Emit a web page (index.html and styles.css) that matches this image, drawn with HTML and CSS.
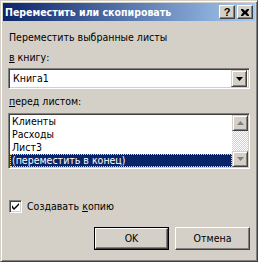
FILE: index.html
```html
<!DOCTYPE html>
<html>
<head>
<meta charset="utf-8">
<link rel="stylesheet" href="styles.css">
</head>
<body>
<div class="window">
  <div class="titlebar">
    <span class="title">Переместить или скопировать</span>
    <div class="caps">
      <span class="cap">?</span>
      <span class="cap cap-x"><svg width="8" height="7" viewBox="0 0 8 7"><path d="M0 0h2l2 2 2-2h2v1L6 3.5 8 6v1H6L4 5 2 7H0V6l2-2.5L0 1z" fill="#000"/></svg></span>
    </div>
  </div>
  <div class="body">
    <div class="label l1">Переместить выбранные листы</div>
    <div class="label l2"><u>в</u> книгу:</div>
    <div class="combo">
      <span class="combo-text">Книга1</span>
      <span class="drop"><svg width="7" height="4" viewBox="0 0 7 4"><path d="M0 0h7L3.5 4z" fill="#000"/></svg></span>
    </div>
    <div class="label l3"><u>п</u>еред листом:</div>
    <div class="list">
      <div class="items">
        <div class="item">Клиенты</div>
        <div class="item">Расходы</div>
        <div class="item">Лист3</div>
        <div class="item sel">(переместить в конец)</div>
      </div>
      <div class="sbar">
        <span class="sbtn"><svg width="7" height="4" viewBox="0 0 7 4"><path d="M3.5 0L7 4H0z" fill="#808080"/></svg></span>
        <span class="track"></span>
        <span class="sbtn"><svg width="7" height="4" viewBox="0 0 7 4"><path d="M0 0h7L3.5 4z" fill="#808080"/></svg></span>
      </div>
    </div>
    <label class="check">
      <span class="box"><svg width="9" height="9" viewBox="0 0 9 9"><path d="M1 3v3l2 2 5-5V1L3 6z" fill="#000"/></svg></span>
      <span>Создавать <u>к</u>опию</span>
    </label>
    <div class="buttons">
      <span class="btn default"><span class="btn-in">OK</span></span>
      <span class="btn"><span class="btn-in">Отмена</span></span>
    </div>
  </div>
</div>
</body>
</html>
```
FILE: styles.css
```css
html, body {
  margin: 0;
  padding: 0;
  background: #d4d0c8;
}
body {
  font-family: "DejaVu Sans Condensed", "DejaVu Sans", sans-serif;
  font-size: 10.5px;
  line-height: 13px;
  color: #000;
}
.window {
  width: 258px;
  height: 262px;
  box-sizing: border-box;
  border: 1px solid;
  border-color: #d4d0c8 #404040 #404040 #d4d0c8;
  box-shadow: inset 1px 1px #fff, inset -1px -1px #808080;
  padding: 2px;
  background: #d4d0c8;
  display: flex;
  flex-direction: column;
}
.titlebar {
  height: 18px;
  flex: none;
  background: linear-gradient(to right, #0a246a, #a6caf0);
  display: flex;
  align-items: center;
  justify-content: space-between;
}
.title {
  color: #fff;
  font-weight: bold;
  font-size: 10.5px;
  padding-left: 2px;
}
.caps {
  display: flex;
  gap: 2px;
  margin-right: 2px;
}
.cap {
  width: 16px;
  height: 14px;
  box-sizing: border-box;
  background: #d4d0c8;
  border: 1px solid;
  border-color: #fff #404040 #404040 #fff;
  box-shadow: inset -1px -1px #808080;
  display: flex;
  align-items: center;
  justify-content: center;
  font-family: "Liberation Sans", Arial, sans-serif;
  font-weight: bold;
  font-size: 11px;
  line-height: 12px;
}
.body {
  flex: 1;
  padding: 10px 5px 0 5px;
  display: flex;
  flex-direction: column;
}
.label { padding-left: 1px; }
.l2 { margin-top: 7px; }
.l3 { margin-top: 6px; }
u { text-decoration: underline; text-underline-offset: 1px; }
.combo {
  margin-top: 4px;
  height: 21px;
  box-sizing: border-box;
  border: 1px solid;
  border-color: #808080 #fff #fff #808080;
  box-shadow: inset 1px 1px #404040, inset -1px -1px #d4d0c8;
  background: #fff;
  display: flex;
  align-items: center;
  padding: 2px;
}
.combo-text { flex: 1; padding-left: 2px; }
.drop, .sbtn {
  width: 16px;
  height: 17px;
  box-sizing: border-box;
  background: #d4d0c8;
  border: 1px solid;
  border-color: #d4d0c8 #404040 #404040 #d4d0c8;
  box-shadow: inset 1px 1px #fff, inset -1px -1px #808080;
  display: flex;
  align-items: center;
  justify-content: center;
}
.list {
  margin-top: 5px;
  height: 56px;
  box-sizing: border-box;
  border: 1px solid;
  border-color: #808080 #fff #fff #808080;
  box-shadow: inset 1px 1px #404040, inset -1px -1px #d4d0c8;
  background: #fff;
  padding: 1px;
  display: flex;
}
.items { flex: 1; }
.item { height: 13px; padding-left: 2px; }
.item.sel {
  background: #0a246a;
  color: #fff;
  outline: 1px dotted #f3d57a;
  outline-offset: -1px;
}
.sbar {
  width: 16px;
  display: flex;
  flex-direction: column;
}
.sbtn { height: 16px; }
.track {
  flex: 1;
  background: repeating-conic-gradient(#fff 0 25%, #d4d0c8 0 50%) 0 0 / 2px 2px;
}
.check {
  margin-top: 31px;
  display: flex;
  align-items: center;
  gap: 5px;
  padding-left: 1px;
}
.box {
  width: 13px;
  height: 13px;
  box-sizing: border-box;
  border: 1px solid;
  border-color: #808080 #fff #fff #808080;
  box-shadow: inset 1px 1px #404040, inset -1px -1px #d4d0c8;
  background: #fff;
  display: flex;
  align-items: center;
  justify-content: center;
}
.buttons {
  margin-top: 14px;
  display: flex;
  justify-content: flex-end;
  gap: 6px;
}
.btn {
  width: 75px;
  height: 23px;
  box-sizing: border-box;
  border: 1px solid;
  border-color: #fff #404040 #404040 #fff;
  box-shadow: inset -1px -1px #808080;
  display: flex;
}
.btn.default {
  border: 1px solid #000;
  box-shadow: none;
}
.btn-in {
  flex: 1;
  display: flex;
  align-items: center;
  justify-content: center;
}
.btn.default .btn-in {
  border: 1px solid;
  border-color: #fff #404040 #404040 #fff;
  box-shadow: inset -1px -1px #808080;
}
```
